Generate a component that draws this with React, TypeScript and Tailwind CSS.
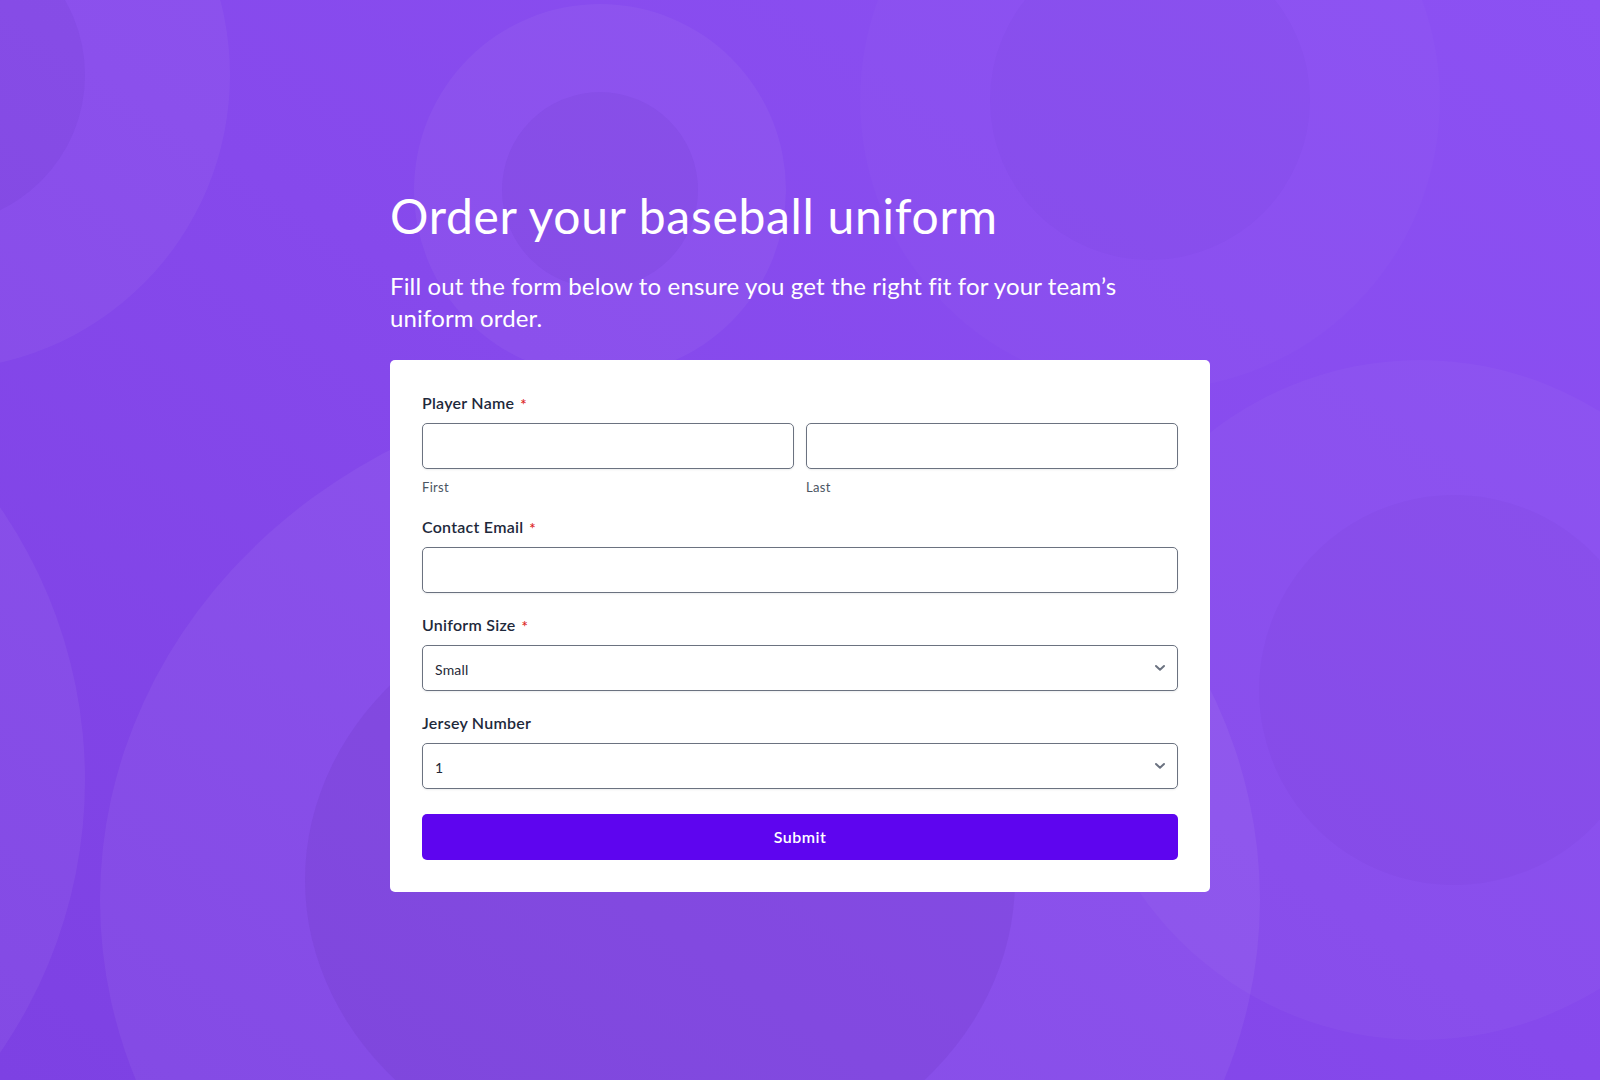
import React from 'react';

const sizes = ['Small', 'Medium', 'Large', 'X-Large', 'XX-Large'];
const numbers = Array.from({ length: 99 }, (_, i) => String(i + 1));

const Backdrop: React.FC = () => (
  <svg
    className="absolute inset-0 h-full w-full"
    viewBox="0 0 1600 1080"
    preserveAspectRatio="xMidYMid slice"
    aria-hidden="true"
  >
    {/* top left */}
    <circle cx="-65" cy="75" r="295" fill="#ffffff" fillOpacity="0.045" />
    <circle cx="-65" cy="75" r="150" fill="#4c1d95" fillOpacity="0.07" />
    {/* behind the title */}
    <circle cx="600" cy="190" r="186" fill="#ffffff" fillOpacity="0.045" />
    <circle cx="600" cy="190" r="98" fill="#4c1d95" fillOpacity="0.07" />
    {/* top right */}
    <circle cx="1150" cy="100" r="290" fill="#ffffff" fillOpacity="0.02" />
    <circle cx="1150" cy="100" r="160" fill="#4c1d95" fillOpacity="0.03" />
    {/* bottom left */}
    <circle cx="-395" cy="780" r="480" fill="#ffffff" fillOpacity="0.05" />
    <ellipse cx="680" cy="900" rx="580" ry="520" fill="#ffffff" fillOpacity="0.05" />
    <ellipse cx="660" cy="880" rx="355" ry="300" fill="#4c1d95" fillOpacity="0.1" />
    {/* bottom right */}
    <circle cx="1420" cy="700" r="340" fill="#ffffff" fillOpacity="0.03" />
    <circle cx="1454" cy="690" r="195" fill="#4c1d95" fillOpacity="0.04" />
  </svg>
);

const Label: React.FC<{ text: string; required?: boolean }> = ({ text, required }) => (
  <div className="mb-2 flex h-6 items-center text-[16px] leading-6 font-semibold tracking-[0.25px] text-[#1e293b]">
    {text}
    {required && (
      <span className="ml-[6px] translate-y-[2px] text-[15px] leading-none font-semibold text-[#dc2626]">*</span>
    )}
  </div>
);

const fieldClass =
  'h-[46px] w-full rounded-[5px] border border-[#6b7280] bg-white px-3 pt-[3px] text-[14px] tracking-[0.2px] text-[#1f2937] shadow-[0_1px_2px_rgba(15,23,42,0.08)] focus:outline-none';

const TextField: React.FC<{ type?: string }> = ({ type = 'text' }) => (
  <input type={type} className={fieldClass} />
);

const SelectField: React.FC<{ options: string[] }> = ({ options }) => (
  <div className="relative">
    <select className={`${fieldClass} appearance-none pr-9`} defaultValue={options[0]}>
      {options.map((o) => (
        <option key={o} value={o}>
          {o}
        </option>
      ))}
    </select>
    <svg
      className="pointer-events-none absolute top-1/2 right-[13px] -translate-y-1/2"
      width="10"
      height="7"
      viewBox="0 0 10 7"
      fill="none"
    >
      <polyline points="1,1.5 5,5.2 9,1.5" stroke="#6b7280" strokeWidth="2" strokeLinecap="round" strokeLinejoin="round" />
    </svg>
  </div>
);

export default function App() {
  return (
    <div className="relative h-[1080px] w-full overflow-hidden bg-linear-to-bl from-[#8c51f3] via-[#8649ec] to-[#7d41e3] font-['Lato','Noto_Sans',sans-serif] [font-variant-ligatures:none]">
      <Backdrop />

      <div className="relative mx-auto w-[820px] pt-[187px]">
        <h1 className="text-[48px] leading-[1.2] font-normal tracking-[0.7px] text-white">Order your baseball uniform</h1>
        <p className="mt-[25px] max-w-[770px] text-[24px] leading-8 tracking-[0.15px] text-white">
          Fill out the form below to ensure you get the right fit for your team’s uniform order.
        </p>

        <form
          className="mt-[26px] flex flex-col rounded-[5px] bg-white px-8 pt-[31px] pb-8"
          onSubmit={(e) => e.preventDefault()}
        >
          <div>
            <Label text="Player Name" required />
            <div className="grid grid-cols-2 gap-3">
              <div>
                <TextField />
                <div className="mt-[9px] text-[13px] leading-[18px] tracking-[0.3px] text-[#4b5563]">First</div>
              </div>
              <div>
                <TextField />
                <div className="mt-[9px] text-[13px] leading-[18px] tracking-[0.3px] text-[#4b5563]">Last</div>
              </div>
            </div>
          </div>

          <div className="mt-[19px]">
            <Label text="Contact Email" required />
            <TextField type="email" />
          </div>

          <div className="mt-5">
            <Label text="Uniform Size" required />
            <SelectField options={sizes} />
          </div>

          <div className="mt-5">
            <Label text="Jersey Number" />
            <SelectField options={numbers} />
          </div>

          <button
            type="submit"
            className="mt-[25px] h-[46px] w-full rounded-[5px] bg-[#5e05ef] text-[16px] font-semibold tracking-[0.5px] text-white"
          >
            Submit
          </button>
        </form>
      </div>
    </div>
  );
}
